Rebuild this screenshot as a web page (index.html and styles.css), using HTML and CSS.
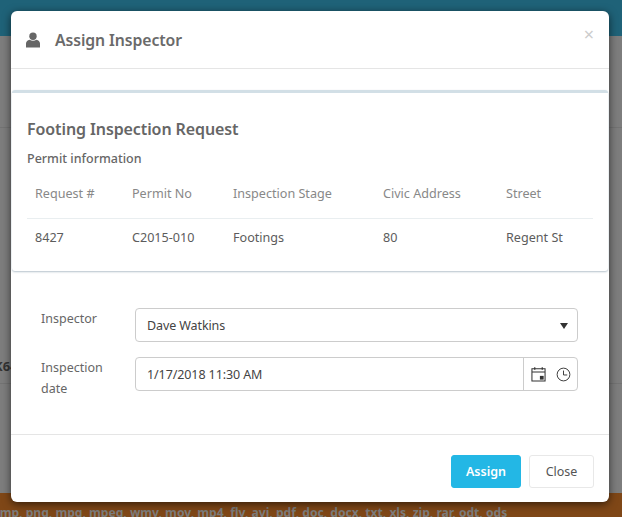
FILE: index.html
```html
<!DOCTYPE html>
<html lang="en">
<head>
  <meta charset="UTF-8" />
  <title>Assign Inspector</title>
  <link rel="stylesheet" href="styles.css">
</head>
<body>

<div class="page">
  <div class="topbar"></div>
  <div class="content">
    <div class="rule rule-one"></div>
    <div class="stray">K64</div>
    <div class="rule rule-two"></div>
  </div>
  <div class="filetypes">bmp, png, mpg, mpeg, wmv, mov, mp4, flv, avi, pdf, doc, docx, txt, xls, zip, rar, odt, ods</div>
</div>

<div class="modal-wrap">
  <div class="modal">
    <div class="modal-header">
      <svg class="user-icon" viewBox="0 0 16 16" width="16" height="16">
        <circle cx="8" cy="4.2" r="3.7" fill="#666"/>
        <path d="M1 15.5 V11.6 C1 9.4 2.6 8 4.6 7.7 C6.6 9 9.4 9 11.4 7.7 C13.4 8 15 9.4 15 11.6 V15.5 Z" fill="#666"/>
      </svg>
      <h4>Assign Inspector</h4>
      <span class="close-x">×</span>
    </div>

    <div class="modal-body">
      <div class="card">
        <h3>Footing Inspection Request</h3>
        <div class="subtitle">Permit information</div>
        <table>
          <tr>
            <th class="col-request">Request #</th>
            <th class="col-permit">Permit No</th>
            <th class="col-stage">Inspection Stage</th>
            <th class="col-civic">Civic Address</th>
            <th>Street</th>
          </tr>
          <tr>
            <td>8427</td>
            <td>C2015-010</td>
            <td>Footings</td>
            <td>80</td>
            <td>Regent St</td>
          </tr>
        </table>
      </div>

      <form class="assign-form">
        <div class="form-row">
          <label>Inspector</label>
          <div class="field select-field">
            <span>Dave Watkins</span>
            <span class="caret"></span>
          </div>
        </div>
        <div class="form-row">
          <label>Inspection date</label>
          <div class="field date-field">
            <span class="date-value">1/17/2018 11:30 AM</span>
            <span class="date-icons">
              <svg viewBox="0 0 16 16" width="15" height="16">
                <path d="M1 2.5 H15 V15.5 H1 Z M1 5.8 H15" fill="none" stroke="#333" stroke-width="1.1"/>
                <path d="M4 0.8 V3.5 M12 0.8 V3.5" stroke="#333" stroke-width="1.3"/>
                <rect x="9.5" y="10" width="4" height="4" fill="#333"/>
              </svg>
              <svg viewBox="0 0 16 16" width="15" height="15">
                <circle cx="8" cy="8" r="6.8" fill="none" stroke="#333" stroke-width="1"/>
                <path d="M8 3.8 V8.5 H12" fill="none" stroke="#333" stroke-width="1"/>
              </svg>
            </span>
          </div>
        </div>
      </form>
    </div>

    <div class="modal-footer">
      <button type="button" class="btn btn-assign">Assign</button>
      <button type="button" class="btn btn-close">Close</button>
    </div>
  </div>
</div>

</body>
</html>
```

FILE: styles.css
```css
html, body { margin: 0; height: 517px; overflow: hidden; }
body { font-family: "Noto Sans", "Open Sans", sans-serif; font-size: 13px; color: #555; position: relative; }

.page { height: 517px; display: flex; flex-direction: column; background: #7d7d7d; }
.topbar { height: 36px; background: #1f6278; }
.content { flex: 1; }
.rule { height: 1px; background: #737373; }
.rule-one { margin-top: 91px; }
.stray { margin-top: 230px; margin-left: -6px; font-weight: bold; font-size: 13px; color: #333; line-height: 16px; }
.rule-two { margin-top: 9px; }
.filetypes { height: 24px; background: #7f4717; color: #7c7c7c; font-weight: bold; font-size: 12.1px; line-height: 40px; overflow: hidden; white-space: nowrap; margin-left: -8px; }

.modal-wrap { position: absolute; inset: 0; padding: 11px 13px 0 11px; }
.modal { background: #fff; border-radius: 6px; height: 491px; box-shadow: 0 2px 8px rgba(0,0,0,0.6); display: flex; flex-direction: column; }

.modal-header { height: 57px; border-bottom: 1px solid #e5e5e5; display: flex; align-items: center; padding: 0 15px 0 14px; position: relative; }
.user-icon { margin: 0 14px 0 0; }
.modal-header h4 { margin: 0; font-size: 15.8px; font-weight: 600; color: #6a6a6a; letter-spacing: -0.1px; }
.close-x { position: absolute; top: 12px; right: 15px; font-size: 18px; line-height: 22px; color: #ccc; }

.modal-body { flex: 1; padding-top: 21px; }
.card { margin: 0 1px; height: 178px; border-top: 3px solid #d2dfe6; border-radius: 3px; box-shadow: 0 1px 2px rgba(90,120,140,0.45); padding: 0 15px; }
.card h3 { margin: 0; padding-top: 25px; font-size: 16px; line-height: 22px; font-weight: 600; color: #666; letter-spacing: -0.1px; }
.subtitle { margin-top: 10px; font-size: 12.5px; line-height: 18px; font-weight: 500; color: #666; }

table { width: 100%; border-collapse: collapse; table-layout: fixed; margin-top: 8px; font-size: 12.6px; }
th { text-align: left; font-weight: 400; color: #888; padding: 8px 8px 14px; line-height: 20px; }
td { color: #5c5c5c; padding: 9px 8px; line-height: 20px; border-top: 1px solid #e9eef0; }
.col-request { width: 81px; }
.col-permit { width: 85px; }
.col-stage { width: 134px; }
.col-civic { width: 107px; }

.assign-form { padding: 37px 31px 0 30px; }
.form-row { display: flex; margin-bottom: 15px; }
.form-row label { width: 64px; margin-right: 30px; font-size: 12.5px; line-height: 21px; color: #666; }
.field { flex: 1; height: 32px; border: 1px solid #ccc; border-radius: 4px; display: flex; align-items: center; font-size: 12.5px; color: #444; letter-spacing: -0.1px; }
.select-field { justify-content: space-between; padding: 0 12px 0 11px; }
.caret { width: 0; height: 0; border-left: 4px solid transparent; border-right: 4px solid transparent; border-top: 6px solid #333; margin-top: 2px; margin-right: -3px; }
.date-value { flex: 1; padding-left: 11px; }
.date-icons { width: 54px; height: 100%; border-left: 1px solid #ccc; display: flex; align-items: center; justify-content: space-between; padding: 0 6px 0 7px; box-sizing: border-box; }

.modal-footer { height: 68px; border-top: 1px solid #e5e5e5; display: flex; justify-content: flex-end; gap: 8px; padding: 20px 15px 0 0; box-sizing: border-box; }
.btn { height: 33px; border-radius: 3px; font-family: inherit; font-size: 12.5px; }
.btn-assign { width: 70px; background: #23b7e5; border: 1px solid #23b7e5; color: #fff; font-weight: 600; }
.btn-close { width: 65px; background: #fff; border: 1px solid #e8e8e8; color: #555; }
```
